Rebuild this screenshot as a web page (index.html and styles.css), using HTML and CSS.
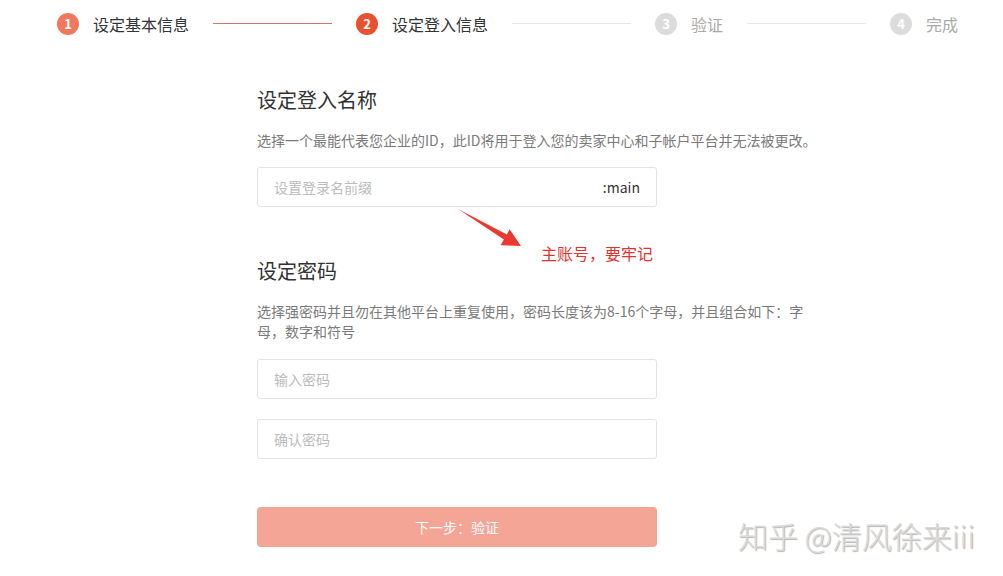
FILE: index.html
```html
<!DOCTYPE html>
<html lang="zh-CN">
<head>
<meta charset="utf-8">
<title>设定登入信息</title>
<link rel="stylesheet" href="styles.css">
</head>
<body>
<div class="page">
  <div class="steps">
    <div class="step done"><span class="num">1</span><span class="label">设定基本信息</span></div>
    <div class="line active"></div>
    <div class="step current"><span class="num">2</span><span class="label">设定登入信息</span></div>
    <div class="line"></div>
    <div class="step todo"><span class="num">3</span><span class="label">验证</span></div>
    <div class="line"></div>
    <div class="step todo"><span class="num">4</span><span class="label">完成</span></div>
  </div>

  <div class="form">
    <h2 class="title">设定登入名称</h2>
    <p class="desc single">选择一个最能代表您企业的ID，此ID将用于登入您的卖家中心和子帐户平台并无法被更改。</p>
    <div class="field">
      <span class="placeholder">设置登录名前缀</span>
      <span class="suffix">:main</span>
    </div>

    <div class="note">
      <svg class="arrow" width="70" height="46" viewBox="0 0 70 46">
        <polygon points="3,4 51.9,29.4 54.6,24.2 66,41 45.6,40.2 48.9,34.6" fill="#ea3a30"/>
      </svg>
      <span class="note-text">主账号，要牢记</span>
    </div>

    <h2 class="title pw-title">设定密码</h2>
    <p class="desc">选择强密码并且勿在其他平台上重复使用，密码长度该为8-16个字母，并且组合如下：字母，数字和符号</p>
    <div class="field pw-field"><span class="placeholder">输入密码</span></div>
    <div class="field pw-field2"><span class="placeholder">确认密码</span></div>

    <button class="next">下一步：验证</button>
  </div>

  <div class="watermark">知乎 @清风徐来iii</div>
</div>
</body>
</html>
```

FILE: styles.css
```css
* { box-sizing: border-box; }
html, body {
  margin: 0;
  padding: 0;
  background: #fff;
}
body {
  font-family: "Noto Sans CJK SC", "Noto Sans", "Liberation Sans", sans-serif;
  color: #333;
  width: 1003px;
  height: 576px;
  overflow: hidden;
}
.page {
  position: relative;
  width: 1003px;
  height: 576px;
}
.steps {
  display: flex;
  align-items: center;
  padding: 12px 0 0 57px;
  height: 35px;
}
.step {
  display: flex;
  align-items: center;
  gap: 14px;
}
.num {
  width: 22px;
  height: 22px;
  border-radius: 50%;
  color: #fff;
  font-size: 13px;
  font-weight: bold;
  display: flex;
  align-items: center;
  justify-content: center;
  line-height: 1;
}
.label {
  font-size: 16px;
  line-height: 22px;
  color: #333;
}
.done .num { background: #f0785f; }
.current .num { background: #e9502d; }
.todo .num { background: #dcdcdc; }
.todo .label { color: #aaa; }
.line {
  width: 119px;
  height: 1px;
  background: #e6e6e6;
  margin: 0 24px;
}
.line.active { background: #cf7762; }

.form {
  position: relative;
  margin-left: 257px;
  width: 550px;
  padding-top: 51px;
}
.title {
  margin: 0;
  font-size: 20px;
  line-height: 28px;
  font-weight: normal;
  color: #333;
}
.desc {
  margin: 16px 0 0;
  font-size: 14px;
  line-height: 20px;
  color: #7a7a7a;
}
.desc.single { white-space: nowrap; }
.field {
  width: 400px;
  height: 40px;
  border: 1px solid #e3e3e3;
  border-radius: 3px;
  margin-top: 17px;
  display: flex;
  align-items: center;
  justify-content: space-between;
  padding: 0 16px 0 16px;
  font-size: 14px;
}
.placeholder { color: #bbb; }
.suffix { color: #333; }
.pw-title { margin-top: 50px; }
.pw-field { margin-top: 18px; }
.pw-field2 { margin-top: 20px; }

.note {
  position: absolute;
  left: 198px;
  top: 170px;
  width: 210px;
  height: 60px;
}
.arrow {
  position: absolute;
  left: 0;
  top: 0;
}
.note-text {
  position: absolute;
  left: 86px;
  top: 37px;
  font-size: 16px;
  line-height: 22px;
  color: #e3332d;
  white-space: nowrap;
}

.next {
  display: block;
  margin-top: 48px;
  width: 400px;
  height: 40px;
  border: none;
  border-radius: 4px;
  background: #f5a596;
  color: #fff;
  font-family: inherit;
  font-size: 14px;
  padding: 0;
}

.watermark {
  position: absolute;
  right: 28px;
  bottom: 23px;
  font-size: 30px;
  line-height: 36px;
  font-weight: 300;
  color: #dadada;
  text-shadow: 1px 1px 1px rgba(0,0,0,0.3);
  white-space: nowrap;
}
```
